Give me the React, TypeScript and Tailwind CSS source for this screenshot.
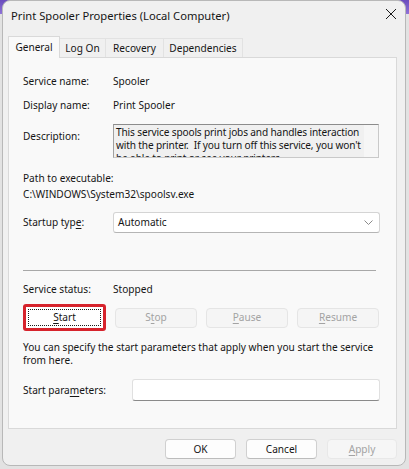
const ROW = 'flex items-center';
const LABEL = 'w-[90px] shrink-0';

function Mn({ children }: { children: string }) {
  return <span className="underline underline-offset-[2px] decoration-[1px]">{children}</span>;
}

function DisabledButton({ children, width }: { children: React.ReactNode; width: string }) {
  return (
    <div className={`${width} h-[20px] flex items-center justify-center rounded-[4px] border border-[#e5e5e5] bg-[#f5f5f5] text-[#a3a3a3]`}>
      {children}
    </div>
  );
}

export default function App() {
  return (
    <div className="w-[409px] h-[469px] overflow-hidden pl-[2px] bg-[linear-gradient(to_bottom,#6a4cbd_0px,#8f73d8_14px,#e2e2e2_14px)] font-['Noto_Sans',sans-serif] text-[10.1px] leading-[13px] text-[#151515]">
      <div className="w-[404px] h-[466px] rounded-[8px] border border-[#b8b8b8] bg-[#f0f0f0] flex flex-col">
        {/* Title bar */}
        <div className="h-[28px] flex items-center justify-between pl-[8px] pr-[8px] text-[11.2px]">
          <span>Print Spooler Properties (Local Computer)</span>
          <svg width="12" height="12" viewBox="0 0 12 12" className="mb-[3px]">
            <path d="M1 1 L11 11 M11 1 L1 11" stroke="#1a1a1a" strokeWidth="1" />
          </svg>
        </div>

        {/* Tabs */}
        <div className="mt-[7px] ml-[5px] h-[22px] flex items-end">
          <div className="relative z-10 w-[52px] h-[22px] flex items-center justify-center border border-b-0 border-[#d9d9d9] bg-[#f9f9f9] pb-[1px]">
            General
          </div>
          <div className="w-[46px] h-[20px] flex items-center justify-center border-t border-r border-[#e2e2e2]">Log On</div>
          <div className="w-[58px] h-[20px] flex items-center justify-center border-t border-r border-[#e2e2e2]">Recovery</div>
          <div className="w-[79px] h-[20px] flex items-center justify-center border-t border-r border-[#e2e2e2]">Dependencies</div>
        </div>

        {/* Panel */}
        <div className="-mt-px ml-[5px] w-[389px] h-[372px] border border-[#d9d9d9] bg-[#f9f9f9] pl-[14px] flex flex-col">
          <div className={`${ROW} mt-[15px] h-[16px]`}>
            <span className={LABEL}>Service name:</span>
            <span>Spooler</span>
          </div>
          <div className={`${ROW} mt-[8px] h-[16px]`}>
            <span className={LABEL}>Display name:</span>
            <span>Print Spooler</span>
          </div>
          <div className="flex items-start mt-[11px]">
            <span className={`${LABEL} mt-[4px] h-[16px] flex items-center`}>Description:</span>
            <div className="w-[266px] h-[34px] overflow-hidden flex border border-[#c9c9c9] border-t-[#8c8c8c] border-l-[#a0a0a0] bg-[#f0f0f0]">
              <div className="flex-1 min-w-0 pl-[2px] pt-[1px] whitespace-nowrap tracking-[-0.14px]">
                This service spools print jobs and handles interaction
                <br />
                with the printer.&nbsp; If you turn off this service, you won't
                <br />
                be able to print or see your printers.
              </div>
              <div className="w-[14px] shrink-0 bg-[#f6f6f6]" />
            </div>
          </div>
          <div className={`${ROW} mt-[12px] h-[16px]`}>Path to executable:</div>
          <div className={`${ROW} h-[16px]`}>C:\WINDOWS\System32\spoolsv.exe</div>
          <div className={`${ROW} mt-[10px]`}>
            <span className={LABEL}>
              Startup typ<Mn>e</Mn>:
            </span>
            <div className="w-[267px] h-[21px] flex items-center justify-between rounded-[3px] border border-[#d4d4d4] border-b-[#b5b5b5] bg-white pl-[4px] pr-[6px]">
              <span>Automatic</span>
              <svg width="9" height="6" viewBox="0 0 9 6">
                <path d="M0.5 0.5 L4.5 4.5 L8.5 0.5" fill="none" stroke="#8a8a8a" strokeWidth="1" />
              </svg>
            </div>
          </div>
          <div className="mt-[37px] w-[353px] h-px bg-[#a8a8a8]" />
          <div className={`${ROW} mt-[10px] h-[16px]`}>
            <span className={LABEL}>Service status:</span>
            <span>Stopped</span>
          </div>
          <div className={`${ROW} mt-[7px] gap-[9px]`}>
            <div className="w-[83px] h-[27px] rounded-[3px] border-[3px] border-[#d6232c] bg-white p-[2px]">
              <div className="h-full flex items-center justify-center border border-dotted border-[#1a1a1a]">
                <span>
                  <Mn>S</Mn>tart
                </span>
              </div>
            </div>
            <DisabledButton width="w-[82px]">
              <span>
                S<Mn>t</Mn>op
              </span>
            </DisabledButton>
            <DisabledButton width="w-[82px]">
              <span>
                <Mn>P</Mn>ause
              </span>
            </DisabledButton>
            <DisabledButton width="w-[82px]">
              <span>
                <Mn>R</Mn>esume
              </span>
            </DisabledButton>
          </div>
          <div className="mt-[9.5px] w-[360px]">
            You can specify the start parameters that apply when you start the service from here.
          </div>
          <div className={`${ROW} mt-[12.5px]`}>
            <span className="w-[109px] shrink-0">
              Start para<Mn>m</Mn>eters:
            </span>
            <div className="w-[248px] h-[22px] rounded-[3px] border border-[#e0e0e0] border-b-[#8a8a8a] bg-white" />
          </div>
        </div>

        {/* Dialog buttons */}
        <div className="mt-[10px] ml-[5px] w-[389px] flex justify-end gap-[10px]">
          <div className="w-[71px] h-[20px] flex items-center justify-center rounded-[4px] border border-[#d0d0d0] border-b-[#bcbcbc] bg-[#fdfdfd]">
            OK
          </div>
          <div className="w-[71px] h-[20px] flex items-center justify-center rounded-[4px] border border-[#d0d0d0] border-b-[#bcbcbc] bg-[#fdfdfd]">
            Cancel
          </div>
          <div className="w-[70px] h-[20px] flex items-center justify-center rounded-[4px] border border-[#e8e8e8] bg-[#f6f6f6] text-[#a3a3a3]">
            <span>
              <Mn>A</Mn>pply
            </span>
          </div>
        </div>
      </div>
    </div>
  );
}
